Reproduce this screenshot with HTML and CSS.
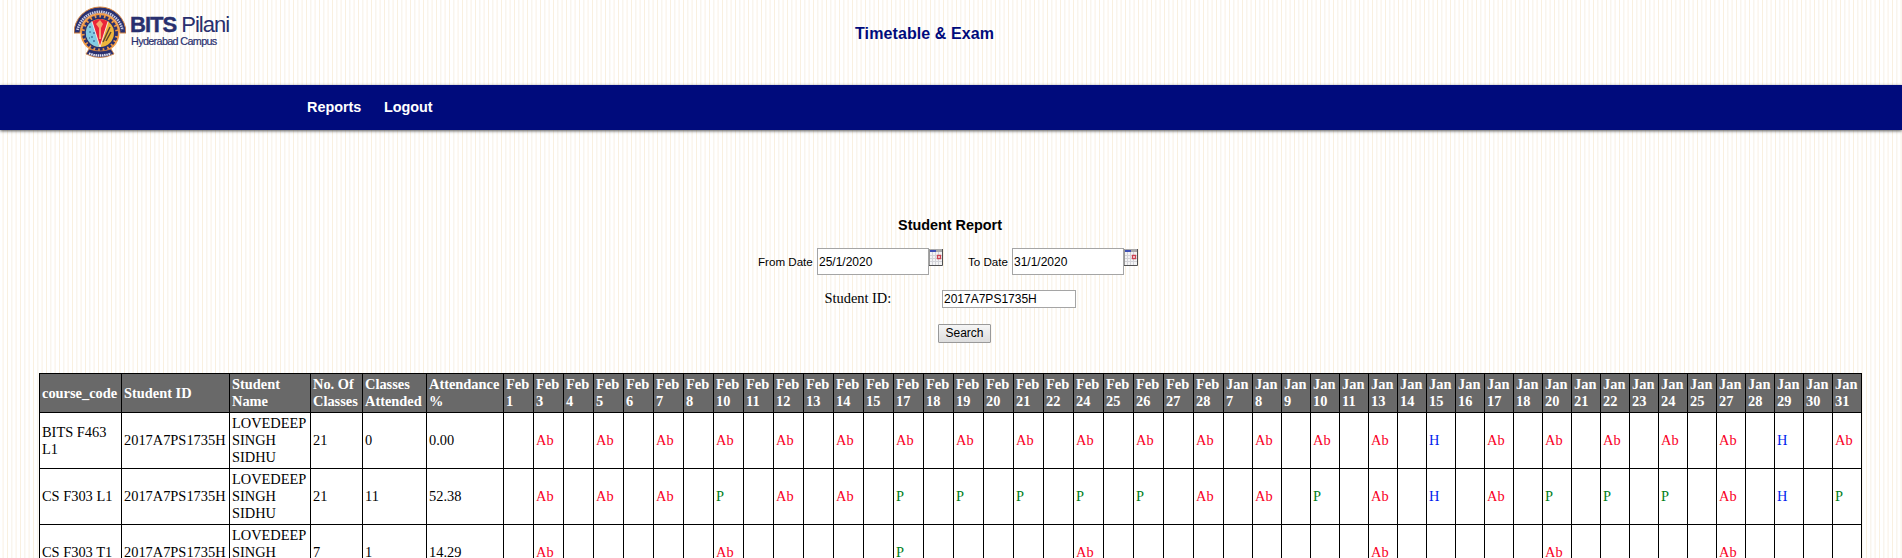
FILE: index.html
```
<!DOCTYPE html>
<html lang="en">
<head>
<meta charset="utf-8">
<title>Student Report</title>
<link rel="stylesheet" href="styles.css">
</head>
<body>
<header class="header">
  <div class="brand">
    <svg class="crest" viewBox="0 0 52 52" width="52" height="52">
      <path d="M0 27A26 26 0 0 1 52 27H46A20 20 0 0 0 6 27Z" fill="#29306f" stroke="#d9853f" stroke-width="1"/>
      <path d="M3.5 24A23 23 0 0 1 48.500 24" fill="none" stroke="#c9cbe2" stroke-width="2.600" stroke-dasharray="1.500 .8"/>
      <circle cx="26" cy="27" r="19.500" fill="#f09a45"/>
      <circle cx="26" cy="27" r="16.500" fill="none" stroke="#29306f" stroke-width="2.800" stroke-dasharray="3 1.600"/>
      <circle cx="26" cy="27" r="15.500" fill="#29306f"/>
      <circle cx="26" cy="27" r="14" fill="#eeb53c"/>
      <path d="M19 14.800A14 14 0 0 0 25 41Z" fill="#83cce4"/>
      <path d="M18 15.500Q26 10.500 34 15.500L26 41Z" fill="#ea2539"/>
      <path d="M18 15.500L26 41L34 15.500" fill="none" stroke="#fff" stroke-width=".8"/>
      <path d="M26 14l3 4-2 4v11h-2V22l-3-4z" fill="#f6a66d"/>
      <path d="M16 20v2m-1 4h2m1 4v2m2-6v2m0 6v2m-5-4h1" stroke="#315c91" stroke-width="1.200"/>
      <path d="M36 21l-7 15m8-10l-5 9" stroke="#594832" stroke-width="1.500"/>
      <path d="M15 43Q26 47 37 43L40 48Q26 55 12 48Z" fill="#29306f" stroke="#d9853f" stroke-width=".8"/>
      <path d="M15 47.500Q26 51.500 37 47.500" fill="none" stroke="#e6e6f2" stroke-width="2.300" stroke-dasharray="1.500 .7"/>
    </svg>
    <div class="wordmark">
      <div class="name"><b>BITS</b> Pilani</div>
      <div class="campus">Hyderabad Campus</div>
    </div>
  </div>
  <div class="app-title">Timetable &amp; Exam</div>
</header>
<nav class="nav"><a>Reports</a><a>Logout</a></nav>
<main>
  <h1 class="title">Student Report</h1>
  <div class="dates">
    <label class="from">From Date</label><input class="date" value="25/1/2020"><svg class="cal" viewBox="0 0 14 17" width="14" height="17"><use href="#calendar"/></svg>
    <label class="to">To Date</label><input class="date" value="31/1/2020"><svg class="cal" viewBox="0 0 14 17" width="14" height="17">
      <g id="calendar">
        <path d="M0 0h14v17H0z" fill="#f3f3f4"/>
        <path d="M0 6.500h13M0 9.500h13M0 12.500h13M3.500 3v13M6.500 3v13M9.500 3v13" stroke="#d3d3d8"/>
        <path d="M0 0h14v3H0z" fill="#a9a9aa"/><path d="M1 1h6v2H1z" fill="#3f50b5"/>
        <path d="M8.500 6.500h3v3h-3z" fill="#fff" stroke="#cb4352" stroke-width="1.300"/>
        <path d="M.5 0v16" stroke="#999"/><path d="M13.500 0v16.500H0" fill="none" stroke="#505052"/>
      </g></svg>
  </div>
  <div class="student"><label>Student ID:</label><input class="sid" value="2017A7PS1735H"></div>
  <div class="actions"><button class="search">Search</button></div>
  <table class="report">
    <colgroup id="cols"></colgroup>
    <thead><tr id="head"></tr></thead>
    <tbody id="body"></tbody>
  </table>
</main>
<script src="report.js"></script>
</body>
</html>
```
FILE: styles.css
```
html { height: 100%; overflow: hidden; }
body {
  margin: 0; height: 100%; overflow: hidden; color: #000;
  background: repeating-linear-gradient(90deg,
    #fff 0 2px, #fdf9f3 2px 3px, #fbf6ef 3px 4px, #fff 4px 7px,
    #f9f0e0 7px 8px, #fff 8px 11px, #f9f5ee 11px 12px, #fcfaf6 12px 13px);
  font-family: "Liberation Serif", serif;
}
.header { height: 85px; display: flex; align-items: flex-start; }
.brand { display: flex; box-sizing: border-box; width: 855px; padding: 6px 0 0 74px; }
.wordmark { padding: 6px 0 0 4px; color: #29306f; font-family: "Liberation Sans", sans-serif; }
.name { font-size: 22px; line-height: 26px; letter-spacing: -1px; white-space: nowrap; }
.name b { -webkit-text-stroke: .4px #29306f; }
.campus { margin-top: -2px; padding-left: 1px; font-size: 10.800px; line-height: 10px; letter-spacing: -.65px; white-space: nowrap; -webkit-text-stroke: .2px #29306f; }
.app-title { margin-top: 24px; color: #000b7c; font: bold 16px/19px "Liberation Sans", sans-serif; letter-spacing: .1px; }
.nav {
  height: 45px; box-sizing: border-box; padding: 13px 0 0 307px; display: flex; gap: 22.500px;
  background: #000b7c; box-shadow: 0 1px 3px #555; color: #fff;
  font: bold 14.4px/18px "Liberation Sans", sans-serif;
}
.title { margin: 86px 2px 0 0; text-align: center; font: bold 14.4px/18px "Liberation Sans", sans-serif; }
.dates { display: flex; height: 28px; margin-top: 14px; padding-left: 758px; font: 11.600px/28px "Liberation Sans", sans-serif; }
.dates label { flex: none; white-space: nowrap; }
.from { width: 59px; }
.to { width: 44px; margin-left: 25px; }
input { box-sizing: border-box; margin: 0; border: 1px solid #a5a5a5; border-radius: 0; padding: 0 1px; background: #fff; color: #000; font: 12px "Liberation Sans", sans-serif; }
.date { width: 112px; height: 27px; }
.cal { margin-top: 1px; }
.student { display: flex; margin-top: 14px; padding-left: 824.500px; height: 18px; font-size: 14.4px; line-height: 16px; }
.student label { width: 117.500px; }
.sid { width: 134px; height: 18px; }
.actions { padding-left: 938px; margin-top: 16px; height: 49px; }
.search { display: block; width: 53px; height: 19px; padding: 0; border: 1px solid #999; border-radius: 1px; background: linear-gradient(#f6f6f6, #ddd); color: #000; font: 12px/15px "Liberation Sans", sans-serif; }
.report { table-layout: fixed; width: 1823px; margin-left: 39px; border-collapse: collapse; background: #fff; font-size: 14.4px; line-height: 17px; }
.report th, .report td { border: 1px solid #000; padding: 2px; text-align: left; vertical-align: middle; }
.report th { height: 34px; background: #696969; color: #fff; }
.report td { height: 51px; }
.report .absent { color: #f9001f; }
.report .present { color: #008020; }
.report .holiday { color: #0022ee; }
```
FILE: report.js
```
const widths = [82, 108, 81, 52, 64, 77];
const heads = ["course_code", "Student ID", "Student<br>Name", "No. Of<br>Classes", "Classes<br>Attended", "Attendance<br>%"];
const feb = [1,3,4,5,6,7,8,10,11,12,13,14,15,17,18,19,20,21,22,24,25,26,27,28];
const jan = [7,8,9,10,11,13,14,15,16,17,18,20,21,22,23,24,25,27,28,29,30,31];
const days = [...feb.map(d => "Feb " + d), ...jan.map(d => "Jan " + d)];

const name = "LOVEDEEP<br>SINGH<br>SIDHU";
const id = "2017A7PS1735H";
const rows = [
  { info: ["BITS F463<br>L1", id, name, "21", "0", "0.00"], P: [],
    Ab: "Feb 3,Feb 5,Feb 7,Feb 10,Feb 12,Feb 14,Feb 17,Feb 19,Feb 21,Feb 24,Feb 26,Feb 28,Jan 8,Jan 10,Jan 13,Jan 17,Jan 20,Jan 22,Jan 24,Jan 27,Jan 31".split(","),
    H: ["Jan 15", "Jan 29"] },
  { info: ["CS F303 L1", id, name, "21", "11", "52.38"],
    P: "Feb 10,Feb 17,Feb 19,Feb 21,Feb 24,Feb 26,Jan 10,Jan 20,Jan 22,Jan 24,Jan 31".split(","),
    Ab: "Feb 3,Feb 5,Feb 7,Feb 12,Feb 14,Feb 28,Jan 8,Jan 13,Jan 17,Jan 27".split(","),
    H: ["Jan 15", "Jan 29"] },
  { info: ["CS F303 T1", id, name, "7", "1", "14.29"], P: ["Feb 17"],
    Ab: "Feb 3,Feb 10,Feb 24,Jan 13,Jan 20,Jan 27".split(","), H: [] }
];
const classes = { P: "present", Ab: "absent", H: "holiday" };

document.getElementById("cols").innerHTML =
  [...widths, ...feb.map(() => 30), ...jan.map(() => 29)].map(w => `<col style="width:${w}px">`).join("");
document.getElementById("head").innerHTML =
  [...heads, ...days.map(d => d.replace(" ", "<br>"))].map(h => `<th>${h}</th>`).join("");
document.getElementById("body").innerHTML = rows.map(r =>
  "<tr>" + r.info.map(t => `<td>${t}</td>`).join("") + days.map(d => {
    const mark = Object.keys(classes).find(k => r[k].includes(d));
    return mark ? `<td class="${classes[mark]}">${mark}</td>` : "<td></td>";
  }).join("") + "</tr>").join("");
```
